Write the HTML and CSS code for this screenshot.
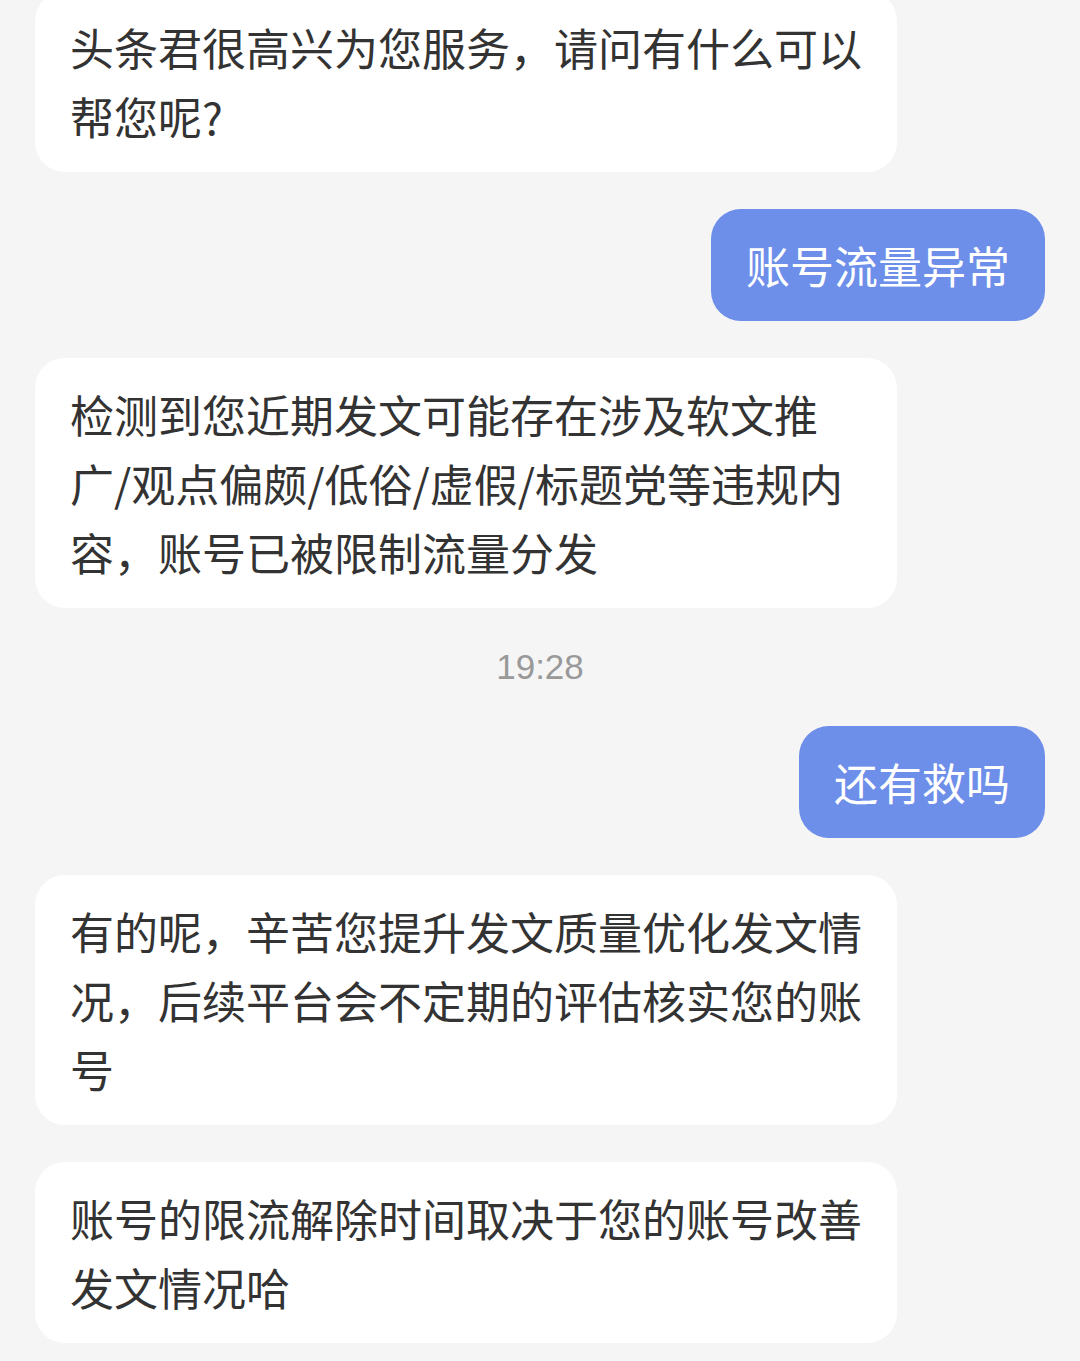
FILE: index.html
```html
<!DOCTYPE html>
<html>
<head>
    <title>头条君</title>
    <link rel="stylesheet" href="styles.css">
</head>
<body>
    <div class="chat">
        <div class="msg msg-in">头条君很高兴为您服务，请问有什么可以帮您呢?</div>

        <div class="msg msg-out">账号流量异常</div>

        <div class="msg msg-in">检测到您近期发文可能存在涉及软文推广/观点偏颇/低俗/虚假/标题党等违规内容，账号已被限制流量分发</div>

        <div class="time">19:28</div>

        <div class="msg msg-out">还有救吗</div>

        <div class="msg msg-in">有的呢，辛苦您提升发文质量优化发文情况，后续平台会不定期的评估核实您的账号</div>

        <div class="msg msg-in">账号的限流解除时间取决于您的账号改善发文情况哈</div>
    </div>
</body>
</html>
```

FILE: styles.css
```css
body {
    margin: 0;
    background-color: #f5f5f5;
    font-family: "Noto Sans CJK SC", "Noto Sans", sans-serif;
}

.chat {
    display: flex;
    flex-direction: column;
    gap: 37px;
    margin-top: -9px;
    padding: 0 35px;
}

.msg {
    box-sizing: border-box;
    max-width: 862px;
    padding: 22px 35px 21px;
    border-radius: 30px;
    font-size: 44px;
    line-height: 69px;
}

.msg-in {
    align-self: flex-start;
    width: 862px;
    background-color: #fff;
    color: #333;
}

.msg-out {
    align-self: flex-end;
    background-color: #6d8ee9;
    color: #fff;
}

.time {
    text-align: center;
    font-family: "Liberation Sans", Arial, sans-serif;
    font-size: 35px;
    line-height: 44px;
    color: #999;
}
```
